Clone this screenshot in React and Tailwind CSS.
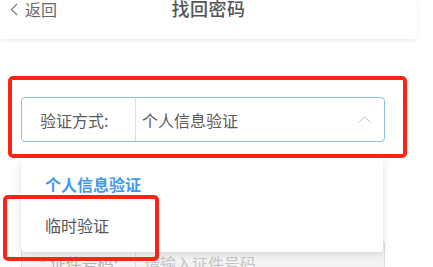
export default function App() {
  return (
    <div className="relative w-[433px] h-[267px] overflow-hidden bg-white font-['Noto_Sans_CJK_SC',sans-serif] text-[#555]">
      <header className="h-[39px] w-[417px] bg-white shadow-[0_2px_4px_rgba(0,0,0,0.07)]">
        <div className="relative h-[18px] flex items-center justify-center">
          <div className="absolute left-[10px] top-0 h-[18px] flex items-center gap-[7px] text-[16px] text-[#666]">
            <svg width="8" height="13" viewBox="0 0 8 13" fill="none">
              <path d="M7 1 L1.5 6.5 L7 12" stroke="#777" strokeWidth="1.1" />
            </svg>
            <span className="leading-none">返回</span>
          </div>
          <h1 className="text-[18px] font-medium leading-none text-[#555] tracking-[0.5px] -mt-[2px]">找回密码</h1>
        </div>
      </header>

      <div className="px-[21px] pt-[58px] w-[406px]">
        <div className="h-[45px] flex items-center border border-[#8fbfe2] rounded-[4px] bg-white">
          <div className="w-[114px] h-full flex items-center pl-[18px] border-r border-[#dcdcdc] text-[16px] text-[#5a5a5a]">
            验证方式:
          </div>
          <div className="flex-1 flex items-center justify-between pl-[6px] pr-[13px] text-[16px] text-[#5a5a5a]">
            <span>个人信息验证</span>
            <svg width="13" height="7" viewBox="0 0 13 7" fill="none">
              <path d="M0.5 6.5 L6.5 0.7 L12.5 6.5" stroke="#c4c4c4" strokeWidth="1" />
            </svg>
          </div>
        </div>

        <div className="mt-[98px] h-[45px] flex items-center border border-[#dcdcdc] rounded-[4px] bg-[#f3f3f3]">
          <div className="w-[114px] h-full flex items-center justify-center border-r border-[#dcdcdc] text-[16px] text-[#b5b5b5]">
            * 证件号码:
          </div>
          <div className="flex-1 pl-[8px] text-[16px] text-[#c5c5c5]">请输入证件号码</div>
        </div>
      </div>

      <div className="absolute left-[21px] top-[158px] w-[362px] h-[94px] bg-white rounded-[4px] shadow-[0_2px_8px_rgba(0,0,0,0.12)] pt-[5px]">
        <div className="h-[41px] flex items-center pl-[24px] text-[16px] font-bold text-[#3f9ae8]">个人信息验证</div>
        <div className="h-[41px] flex items-center pl-[24px] text-[16px] text-[#555]">临时验证</div>
      </div>

      <div className="absolute left-[8px] top-[76px] w-[399px] h-[82px] border-[4px] border-[#fa2415] rounded-[5px]"></div>
      <div className="absolute left-[3px] top-[195px] w-[156px] h-[66px] border-[4px] border-[#fa2415] rounded-[5px]"></div>
    </div>
  );
}
